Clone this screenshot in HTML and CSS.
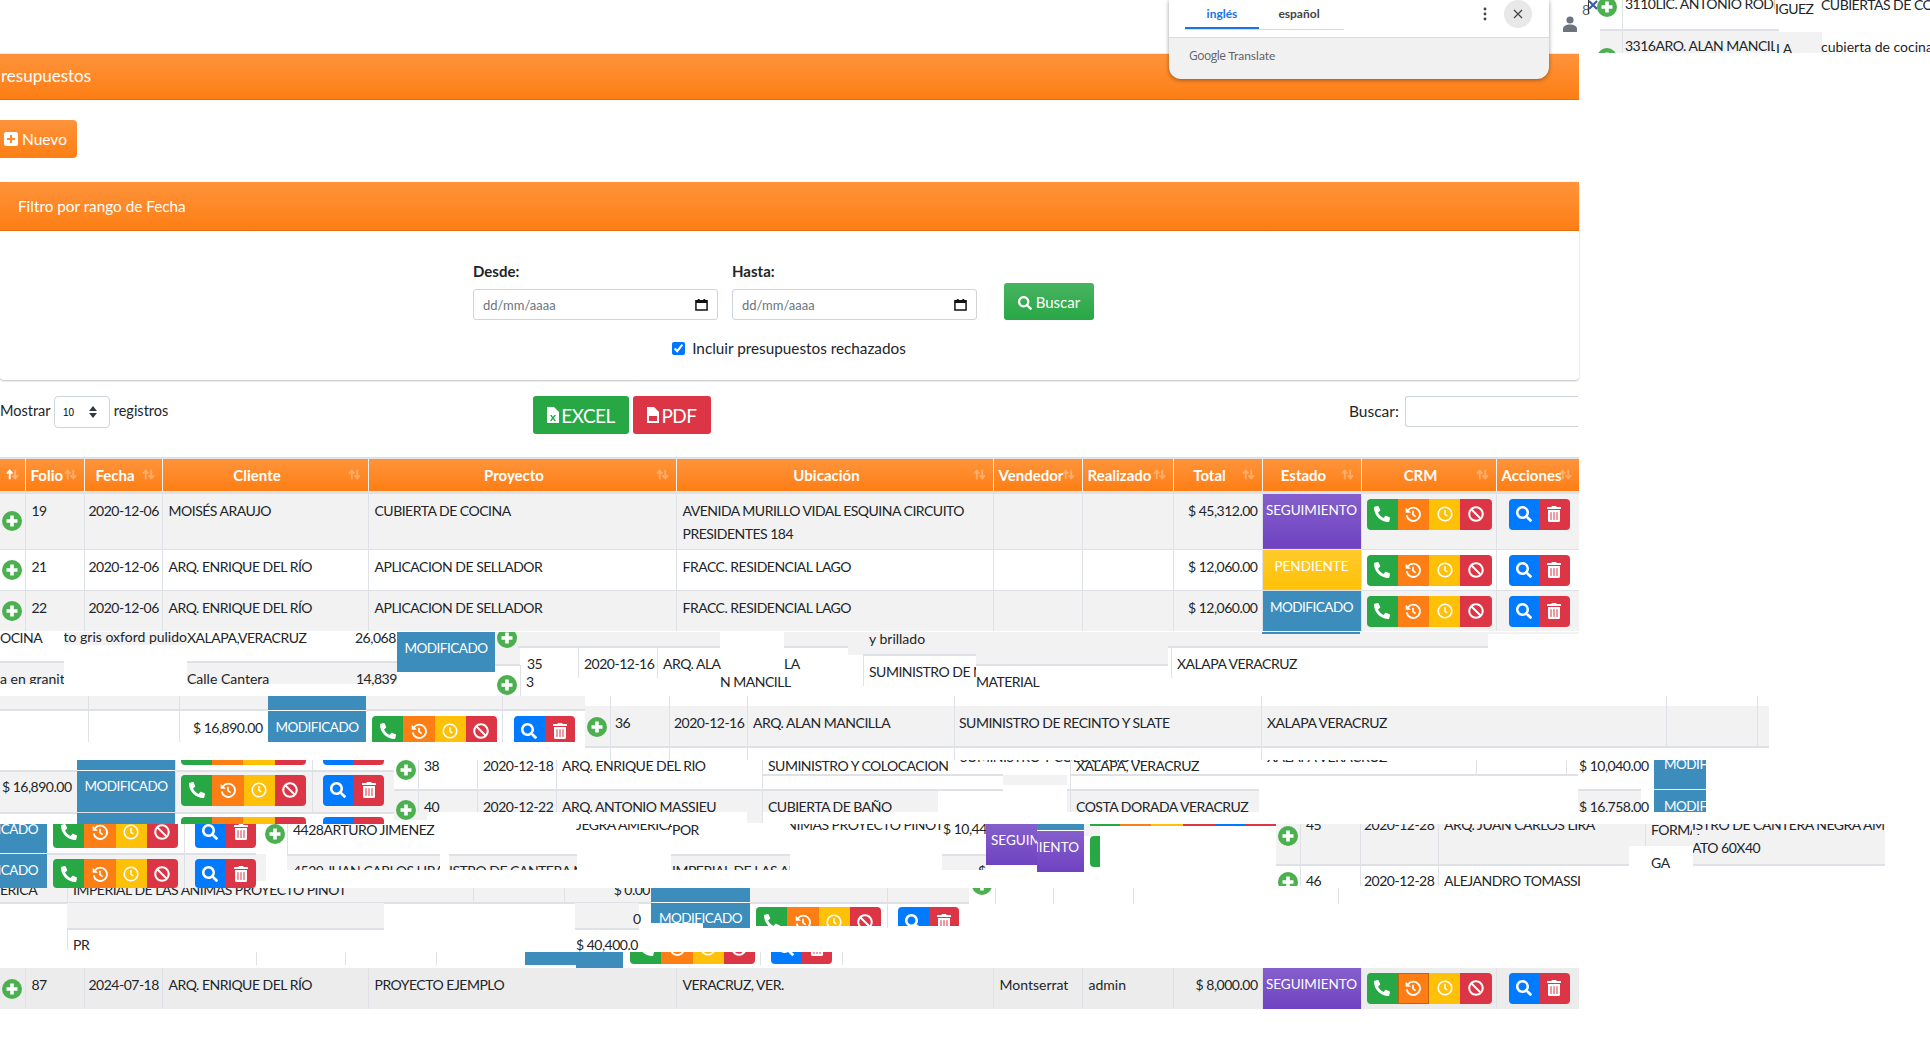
FILE: index.html
```html
<!DOCTYPE html>
<html lang="es">
<head>
  <meta charset="utf-8">
  <title>Presupuestos</title>
  <link rel="stylesheet" href="styles.css">
</head>
<body>
  <svg class="defs" width="0" height="0">
    <symbol id="i-phone" viewBox="0 0 512 512"><path transform="matrix(-1 0 0 1 512 0)" d="M493.4 24.6l-104-24c-11.3-2.6-22.9 3.3-27.5 13.9l-48 112c-4.2 9.8-1.4 21.3 6.9 28l60.6 49.6c-36 76.7-98.9 140.5-177.2 177.2l-49.6-60.6c-6.8-8.3-18.2-11.1-28-6.9l-112 48C3.9 366.5-2 378.1.6 389.4l24 104C27.1 504.2 36.7 512 48 512c256.1 0 464-207.5 464-464 0-11.2-7.7-20.9-18.6-23.4z"/></symbol>
    <symbol id="i-history" viewBox="0 0 24 24"><path d="M4.5 6.5A10 10 0 1 1 2.6 14" fill="none" stroke="currentColor" stroke-width="2.8"/><path d="M1 2.5l8 7.5H1z"/><path d="M12 7v6l4 3" fill="none" stroke="currentColor" stroke-width="2.6"/></symbol>
    <symbol id="i-clock" viewBox="0 0 24 24"><circle cx="12" cy="12" r="10.2" fill="none" stroke="currentColor" stroke-width="2.4"/><path d="M12 6v6.5l3.5 2.5" fill="none" stroke="currentColor" stroke-width="2.2"/></symbol>
    <symbol id="i-ban" viewBox="0 0 512 512"><path d="M256 8C119.034 8 8 119.033 8 256s111.034 248 248 248 248-111.034 248-248S392.967 8 256 8zm130.108 117.892c65.448 65.448 70 165.481 20.677 235.637L150.47 105.216c70.204-49.356 170.226-44.735 235.638 20.676zM125.892 386.108c-65.448-65.448-70-165.481-20.677-235.637L361.53 406.784c-70.203 49.356-170.226 44.736-235.638-20.676z"/></symbol>
    <symbol id="i-search" viewBox="0 0 512 512"><path d="M505 442.7L405.3 343c-4.5-4.5-10.6-7-17-7H372c27.6-35.3 44-79.7 44-128C416 93.1 322.9 0 208 0S0 93.1 0 208s93.1 208 208 208c48.3 0 92.7-16.4 128-44v16.3c0 6.4 2.5 12.5 7 17l99.7 99.7c9.4 9.4 24.6 9.4 33.9 0l28.3-28.3c9.4-9.4 9.4-24.6.1-34zM208 336c-70.7 0-128-57.2-128-128 0-70.7 57.2-128 128-128 70.7 0 128 57.2 128 128 0 70.7-57.2 128-128 128z"/></symbol>
    <symbol id="i-trash" viewBox="0 0 448 512"><path d="M32 464a48 48 0 0 0 48 48h288a48 48 0 0 0 48-48V128H32zm272-256a16 16 0 0 1 32 0v224a16 16 0 0 1-32 0zm-96 0a16 16 0 0 1 32 0v224a16 16 0 0 1-32 0zm-96 0a16 16 0 0 1 32 0v224a16 16 0 0 1-32 0zM432 32H312l-9.4-18.7A24 24 0 0 0 281.1 0H166.8a23.72 23.72 0 0 0-21.4 13.3L136 32H16A16 16 0 0 0 0 48v32a16 16 0 0 0 16 16h416a16 16 0 0 0 16-16V48a16 16 0 0 0-16-16z"/></symbol>
    <symbol id="i-plus" viewBox="0 0 20 20"><circle cx="10" cy="10" r="10" fill="#4caf50"/><path d="M8.2 4.500h3.600v3.700h3.700v3.600h-3.700v3.700H8.200v-3.700H4.500V8.200h3.700z" fill="#fff"/></symbol>
    <symbol id="i-sort" viewBox="0 0 16 14"><path d="M4.500 13V3M1 6l3.500-4L8 6" fill="none" stroke="currentColor" stroke-width="2.400"/><path d="M11.500 1v10M8 8l3.500 4L15 8" fill="none" stroke="currentColor" stroke-width="2.400"/></symbol>
  </svg>

  <div class="page">
    <div class="bar">resupuestos</div>

    <div class="new-row">
      <button class="btn-new">
        <svg class="ico-new" viewBox="0 0 14 14"><rect width="14" height="14" rx="2" fill="#fff"/><path d="M6 3h2v3h3v2H8v3H6V8H3V6h3z" fill="#fd8a2c"/></svg>
        Nuevo
      </button>
    </div>

    <div class="card">
      <div class="card-head">Filtro por rango de Fecha</div>
      <div class="card-body">
        <div class="range">
          <div class="field">
            <label class="lbl">Desde:</label>
            <div class="date-input"><span>dd/mm/aaaa</span><svg class="cal" viewBox="0 0 14 14"><path d="M1 3h12v10H1z" fill="none" stroke="#111" stroke-width="1.6"/><path d="M1 2.500h12v3H1zM3 1h2v2H3zM9 1h2v2H9z" fill="#111"/></svg></div>
          </div>
          <div class="field">
            <label class="lbl">Hasta:</label>
            <div class="date-input"><span>dd/mm/aaaa</span><svg class="cal" viewBox="0 0 14 14"><path d="M1 3h12v10H1z" fill="none" stroke="#111" stroke-width="1.6"/><path d="M1 2.500h12v3H1zM3 1h2v2H3zM9 1h2v2H9z" fill="#111"/></svg></div>
          </div>
          <button class="btn-buscar"><svg class="ico" viewBox="0 0 512 512"><use href="#i-search"/></svg> Buscar</button>
        </div>
        <label class="check"><input type="checkbox" checked> Incluir presupuestos rechazados</label>
      </div>
    </div>

    <div class="tools">
      <div class="length">Mostrar <select class="sel"><option>10</option></select> registros</div>
      <div class="exports">
        <button class="btn-exp excel"><svg class="ico-file" viewBox="0 0 12 16"><path d="M0 0h7l5 5v11H0z" fill="#fff"/><path d="M3 8l2 3-2 3h1.600L6 12l1.400 2H9l-2-3 2-3H7.400L6 10 4.600 8z" fill="#28a745"/></svg>EXCEL</button>
        <button class="btn-exp pdf"><svg class="ico-file" viewBox="0 0 12 16"><path d="M0 0h7l5 5v11H0z" fill="#fff"/><path d="M2 9h8v5H2z" fill="#dc3545"/></svg>PDF</button>
      </div>
      <div class="search">Buscar: <input class="search-input" type="text"></div>
    </div>

    <div class="table-wrap">
      <table class="grid">
        <colgroup><col class="w0"><col class="w1"><col class="w2"><col class="w3"><col class="w4"><col class="w5"><col class="w6"><col class="w7"><col class="w8"><col class="w9"><col class="w10"><col class="w11"></colgroup>
        <thead>
          <tr>
            <th><svg class="sort up" viewBox="0 0 16 14"><path d="M4.500 13V3M1 6l3.500-4L8 6" fill="none" stroke="#fff" stroke-width="2.400"/><path class="faded" d="M11.500 1v10M8 8l3.500 4L15 8" fill="none" stroke="#fff" stroke-width="2.400"/></svg></th>
            <th class="tl">Folio<svg class="sort" viewBox="0 0 16 14"><use href="#i-sort"/></svg></th>
            <th>Fecha<svg class="sort" viewBox="0 0 16 14"><use href="#i-sort"/></svg></th>
            <th>Cliente<svg class="sort" viewBox="0 0 16 14"><use href="#i-sort"/></svg></th>
            <th>Proyecto<svg class="sort" viewBox="0 0 16 14"><use href="#i-sort"/></svg></th>
            <th>Ubicación<svg class="sort" viewBox="0 0 16 14"><use href="#i-sort"/></svg></th>
            <th class="tl">Vendedor<svg class="sort" viewBox="0 0 16 14"><use href="#i-sort"/></svg></th>
            <th class="tl">Realizado<svg class="sort" viewBox="0 0 16 14"><use href="#i-sort"/></svg></th>
            <th>Total<svg class="sort" viewBox="0 0 16 14"><use href="#i-sort"/></svg></th>
            <th>Estado<svg class="sort" viewBox="0 0 16 14"><use href="#i-sort"/></svg></th>
            <th>CRM<svg class="sort" viewBox="0 0 16 14"><use href="#i-sort"/></svg></th>
            <th class="tl">Acciones<svg class="sort" viewBox="0 0 16 14"><use href="#i-sort"/></svg></th>
          </tr>
        </thead>
        <tbody>
          <tr class="odd">
            <td class="ctl"><svg class="plus"><use href="#i-plus"/></svg></td>
            <td>19</td><td class="nw">2020-12-06</td><td>MOISÉS ARAUJO</td><td>CUBIERTA DE COCINA</td>
            <td>AVENIDA MURILLO VIDAL ESQUINA CIRCUITO PRESIDENTES 184</td><td></td><td></td>
            <td class="num">$ 45,312.00</td><td class="st seg">SEGUIMIENTO</td>
            <td class="acts"><div class="grp"><span class="bt gr"><svg><use href="#i-phone"/></svg></span><span class="bt or"><svg><use href="#i-history"/></svg></span><span class="bt ye"><svg><use href="#i-clock"/></svg></span><span class="bt re"><svg><use href="#i-ban"/></svg></span></div></td>
            <td class="acts"><div class="grp act"><span class="bt bl"><svg><use href="#i-search"/></svg></span><span class="bt re"><svg><use href="#i-trash"/></svg></span></div></td>
          </tr>
          <tr>
            <td class="ctl"><svg class="plus"><use href="#i-plus"/></svg></td>
            <td>21</td><td class="nw">2020-12-06</td><td>ARQ. ENRIQUE DEL RÍO</td><td>APLICACION DE SELLADOR</td>
            <td>FRACC. RESIDENCIAL LAGO</td><td></td><td></td>
            <td class="num">$ 12,060.00</td><td class="st pen">PENDIENTE</td>
            <td class="acts"><div class="grp"><span class="bt gr"><svg><use href="#i-phone"/></svg></span><span class="bt or"><svg><use href="#i-history"/></svg></span><span class="bt ye"><svg><use href="#i-clock"/></svg></span><span class="bt re"><svg><use href="#i-ban"/></svg></span></div></td>
            <td class="acts"><div class="grp act"><span class="bt bl"><svg><use href="#i-search"/></svg></span><span class="bt re"><svg><use href="#i-trash"/></svg></span></div></td>
          </tr>
          <tr class="odd">
            <td class="ctl"><svg class="plus"><use href="#i-plus"/></svg></td>
            <td>22</td><td class="nw">2020-12-06</td><td>ARQ. ENRIQUE DEL RÍO</td><td>APLICACION DE SELLADOR</td>
            <td>FRACC. RESIDENCIAL LAGO</td><td></td><td></td>
            <td class="num">$ 12,060.00</td><td class="st mod">MODIFICADO</td>
            <td class="acts"><div class="grp"><span class="bt gr"><svg><use href="#i-phone"/></svg></span><span class="bt or"><svg><use href="#i-history"/></svg></span><span class="bt ye"><svg><use href="#i-clock"/></svg></span><span class="bt re"><svg><use href="#i-ban"/></svg></span></div></td>
            <td class="acts"><div class="grp act"><span class="bt bl"><svg><use href="#i-search"/></svg></span><span class="bt re"><svg><use href="#i-trash"/></svg></span></div></td>
          </tr>
        </tbody>
      </table>
    </div>

    <!-- tramo con los trozos de filas desplazados -->
    <div class="band">
      <!-- A -->
      <div class="bx gy clip r n a1">to gris oxford pulido</div>
      <div class="tx a2">OCINA</div>
      <div class="tx a3">XALAPA,VERACRUZ</div>
      <div class="tx a4">26,068</div>
      <div class="bx bu lab a5">MODIFICADO</div>
      <div class="bx gy lb a6"></div>
      <svg class="plus pl a7"><use href="#i-plus"/></svg>
      <div class="bx gy lb a8"></div>
      <div class="bx gy a10"></div>
      <div class="bx gy lb a11"></div>
      <div class="tx n a9">y brillado</div>
      <div class="bx gy lb a12"></div>
      <div class="bx gy lb a13"></div>
      <div class="bx bu a14"></div>
      <div class="bx gy a15"></div>
      <div class="bx wh a16"></div>
      <div class="vl a17"></div><div class="vl a18"></div><div class="vl a19"></div><div class="vl a20"></div><div class="vl a21"></div>
      <div class="tx a22">35</div>
      <div class="tx a23">2020-12-16</div>
      <div class="tx a24">ARQ. ALA</div>
      <div class="tx a25">LA</div>
      <div class="tx a26">N MANCILL</div>
      <div class="bx clip a27">SUMINISTRO DE M</div>
      <div class="tx a28">MATERIAL</div>
      <div class="tx a29">XALAPA VERACRUZ</div>
      <div class="tx a30">3</div>
      <div class="bx gy lt clip n a31">a en granit</div>
      <div class="bx gy lt a32"></div>
      <div class="tx n a33">Calle Cantera</div>
      <div class="tx a34">14,839</div>
      <svg class="plus pl a35"><use href="#i-plus"/></svg>

      <!-- C, texto de la mitad (va antes de la franja blanca) -->
      <div class="bx gy lt c1"></div>
      <div class="bx gy c2"></div>
      <div class="bx gy c3"></div>
      <div class="hl c4"></div>
      <div class="tx c5">38</div>
      <div class="tx c6">2020-12-18</div>
      <div class="tx c7">ARQ. ENRIQUE DEL RÍO</div>
      <div class="tx c8">SUMINISTRO Y COLOCACION</div>
      <div class="tx c9">XALAPA, VERACRUZ</div>
      <div class="tx c10">SUMINISTRO Y COLOCACION</div>
      <div class="tx c11">XALAPA VERACRUZ</div>
      <div class="bx wh c12"></div>

      <!-- B -->
      <div class="bx gy lb b1"></div>
      <div class="vl b2"></div><div class="vl b3"></div><div class="vl b4"></div>
      <div class="bx bu lab b5">MODIFICADO</div>
      <div class="tx b6">$ 16,890.00</div>
      <div class="grp b7"><span class="bt gr"><svg><use href="#i-phone"/></svg></span><span class="bt or"><svg><use href="#i-history"/></svg></span><span class="bt ye"><svg><use href="#i-clock"/></svg></span><span class="bt re"><svg><use href="#i-ban"/></svg></span></div>
      <div class="grp act b8"><span class="bt bl"><svg><use href="#i-search"/></svg></span><span class="bt re"><svg><use href="#i-trash"/></svg></span></div>
      <div class="bx gy lb b9"></div>
      <div class="vl b10"></div><div class="vl b11"></div><div class="vl b12"></div><div class="vl b13"></div><div class="vl b14"></div><div class="vl b15"></div><div class="vl b16"></div>
      <svg class="plus pl b17"><use href="#i-plus"/></svg>
      <div class="tx b18">36</div>
      <div class="tx b19">2020-12-16</div>
      <div class="tx b20">ARQ. ALAN MANCILLA</div>
      <div class="tx b21">SUMINISTRO DE RECINTO Y SLATE</div>
      <div class="tx b22">XALAPA VERACRUZ</div>

      <!-- C -->
      <div class="bx gy lt lb c13"></div>
      <div class="bx bu lab c14">MODIFICADO</div>
      <div class="bx bu lab clip c15">MODIFICADO</div>
      <div class="tx c16">$ 16,890.00</div>
      <div class="strip c17"></div>
      <div class="strip sa c18"></div>
      <div class="grp c19"><span class="bt gr"><svg><use href="#i-phone"/></svg></span><span class="bt or"><svg><use href="#i-history"/></svg></span><span class="bt ye"><svg><use href="#i-clock"/></svg></span><span class="bt re"><svg><use href="#i-ban"/></svg></span></div>
      <div class="grp act c20"><span class="bt bl"><svg><use href="#i-search"/></svg></span><span class="bt re"><svg><use href="#i-trash"/></svg></span></div>
      <div class="strip top c21"></div>
      <div class="strip sa top c22"></div>
      <div class="vl c23"></div><div class="vl c24"></div>
      <svg class="plus pl c25"><use href="#i-plus"/></svg>
      <svg class="plus pl c26"><use href="#i-plus"/></svg>
      <div class="vl c27"></div><div class="vl c28"></div><div class="vl c29"></div><div class="vl c30"></div>
      <div class="tx c31">40</div>
      <div class="tx c32">2020-12-22</div>
      <div class="tx c33">ARQ. ANTONIO MASSIEU</div>
      <div class="tx c34">CUBIERTA DE BAÑO</div>
      <div class="bx gy c35"></div>
      <div class="hl c36"></div>
      <div class="hl c37"></div>
      <div class="vl c38"></div><div class="vl c39"></div>
      <div class="bx gy lt c40"></div>
      <div class="vl c41"></div>
      <div class="tx c42">COSTA DORADA VERACRUZ</div>
      <div class="bx gy lt c43"></div>
      <div class="tx c44">$ 16,758.00</div>
      <div class="tx c45">$ 10,040.00</div>
      <div class="bx bu lab clip c46">MODIFICADO</div>
      <div class="bx bu lab clip c47">MODIFICADO</div>

      <!-- D -->
      <div class="bx bu lab clip e d1"><span>MODIFICADO</span></div>
      <div class="bx bu lab clip e d2"><span>MODIFICADO</span></div>
      <div class="bx gy lt d3"></div>
      <div class="bx gy d4"></div>
      <div class="grp cut d5"><span class="bt gr"><svg><use href="#i-phone"/></svg></span><span class="bt or"><svg><use href="#i-history"/></svg></span><span class="bt ye"><svg><use href="#i-clock"/></svg></span><span class="bt re"><svg><use href="#i-ban"/></svg></span></div>
      <div class="grp act cut d6"><span class="bt bl"><svg><use href="#i-search"/></svg></span><span class="bt re"><svg><use href="#i-trash"/></svg></span></div>
      <div class="grp d7"><span class="bt gr"><svg><use href="#i-phone"/></svg></span><span class="bt or"><svg><use href="#i-history"/></svg></span><span class="bt ye"><svg><use href="#i-clock"/></svg></span><span class="bt re"><svg><use href="#i-ban"/></svg></span></div>
      <div class="grp act d8"><span class="bt bl"><svg><use href="#i-search"/></svg></span><span class="bt re"><svg><use href="#i-trash"/></svg></span></div>
      <div class="vl d9"></div>
      <svg class="plus pl d10"><use href="#i-plus"/></svg>
      <div class="vl d11"></div>
      <div class="tx d12">4428ARTURO JIMENEZ</div>
      <div class="bx gy lt clip d13">4529 JUAN CARLOS LIRA</div>
      <div class="bx gy lt clip d14">ISTRO DE CANTERA NEGRA</div>
      <div class="bx clip d15">JEGRA AMERICA</div>
      <div class="tx d16">POR</div>
      <div class="bx clip r d17">NIMAS PROYECTO PINOT</div>
      <div class="bx clip d18">$ 10,440.00</div>
      <div class="bx gy lt clip d19">IMPERIAL DE LAS ANIMAS</div>
      <div class="bx gy lt clip d20">$</div>
      <div class="bx pu lab clip d21">SEGUIMIENTO</div>
      <div class="bx pu lab clip e d22"><span>SEGUIMIENTO</span></div>
      <div class="bx bu d23"></div>
      <div class="bx gy d24"></div>
      <div class="bx d25"></div>
      <div class="strip long d26"></div>

      <div class="bx gy lb d27"></div>
      <svg class="plus pl d28"><use href="#i-plus"/></svg>
      <div class="tx d29">45</div>
      <div class="tx d30">2020-12-28</div>
      <div class="tx d31">ARQ. JUAN CARLOS LIRA</div>
      <div class="tx d32">FORMA</div>
      <div class="bx gy clip d33">ISTRO DE CANTERA NEGRA AMERICA</div>
      <div class="tx d34">ATO 60X40</div>
      <div class="bx wh d35"></div>
      <div class="vl d36"></div><div class="vl d37"></div><div class="vl d38"></div><div class="vl d39"></div>
      <div class="bx wh d40"></div>
      <div class="tx d41">GA</div>
      <div class="bx clip d42"><svg class="plus"><use href="#i-plus"/></svg></div>
      <div class="tx d43">46</div>
      <div class="tx d44">2020-12-28</div>
      <div class="tx d45">ALEJANDRO TOMASSI</div>
      <div class="bx clip d46"><svg class="plus d47"><use href="#i-plus"/></svg></div>

      <!-- E -->
      <div class="bx gy lb e1"></div>
      <div class="bx gy clip e2">ERICA</div>
      <div class="bx gy clip e3">IMPERIAL DE LAS ANIMAS PROYECTO PINOT</div>
      <div class="bx gy clip e4">$ 0.00</div>
      <div class="vl e5"></div><div class="vl e6"></div><div class="vl e7"></div>
      <div class="bx gy lb e8"></div>
      <div class="bx gy lb e9"></div>
      <div class="tx e10">0</div>
      <div class="tx e11">PR</div>
      <div class="tx e12">$ 40,400.0</div>
      <div class="bx bu e13"></div>
      <div class="bx bu lab clip e14">MODIFICADO</div>
      <div class="bx bu e15"></div>
      <div class="bx gy lb e16"></div>
      <div class="vl e17"></div><div class="vl e18"></div><div class="vl e19"></div><div class="vl e20"></div><div class="vl e21"></div>
      <div class="grp e22"><span class="bt gr"><svg><use href="#i-phone"/></svg></span><span class="bt or"><svg><use href="#i-history"/></svg></span><span class="bt ye"><svg><use href="#i-clock"/></svg></span><span class="bt re"><svg><use href="#i-ban"/></svg></span></div>
      <div class="grp act e23"><span class="bt bl"><svg><use href="#i-search"/></svg></span><span class="bt re"><svg><use href="#i-trash"/></svg></span></div>
      <div class="grp cut e24"><span class="bt gr"><svg><use href="#i-phone"/></svg></span><span class="bt or"><svg><use href="#i-history"/></svg></span><span class="bt ye"><svg><use href="#i-clock"/></svg></span><span class="bt re"><svg><use href="#i-ban"/></svg></span></div>
      <div class="grp act cut e25"><span class="bt bl"><svg><use href="#i-search"/></svg></span><span class="bt re"><svg><use href="#i-trash"/></svg></span></div>
      <div class="bx bu e26"></div>
      <div class="bx bu e27"></div>
      <div class="vl e28"></div><div class="vl e29"></div><div class="vl e30"></div><div class="vl e31"></div><div class="vl e32"></div>
    </div>

    <table class="grid last">
      <colgroup><col class="w0"><col class="w1"><col class="w2"><col class="w3"><col class="w4"><col class="w5"><col class="w6"><col class="w7"><col class="w8"><col class="w9"><col class="w10"><col class="w11"></colgroup>
      <tbody>
        <tr class="hov">
          <td class="ctl"><svg class="plus"><use href="#i-plus"/></svg></td>
          <td>87</td><td class="nw">2024-07-18</td><td>ARQ. ENRIQUE DEL RÍO</td><td>PROYECTO EJEMPLO</td>
          <td>VERACRUZ, VER.</td><td class="n">Montserrat</td><td class="n">admin</td>
          <td class="num">$ 8,000.00</td><td class="st seg">SEGUIMIENTO</td>
          <td class="acts"><div class="grp"><span class="bt gr"><svg><use href="#i-phone"/></svg></span><span class="bt or focus"><svg><use href="#i-history"/></svg></span><span class="bt ye"><svg><use href="#i-clock"/></svg></span><span class="bt re"><svg><use href="#i-ban"/></svg></span></div></td>
          <td class="acts"><div class="grp act"><span class="bt bl"><svg><use href="#i-search"/></svg></span><span class="bt re"><svg><use href="#i-trash"/></svg></span></div></td>
        </tr>
      </tbody>
    </table>
  </div>

  <!-- ventana de Google Translate -->
  <div class="translate">
    <div class="tr-top">
      <div class="tr-tabs"><span class="tr-tab on">inglés</span><span class="tr-tab">español</span></div>
      <svg class="tr-dots" viewBox="0 0 4 14"><circle cx="2" cy="2" r="1.4"/><circle cx="2" cy="7" r="1.4"/><circle cx="2" cy="12" r="1.4"/></svg>
      <span class="tr-close"><svg viewBox="0 0 10 10"><path d="M1 1l8 8M9 1l-8 8" stroke="#444" stroke-width="1.2"/></svg></span>
    </div>
    <div class="tr-foot"><span class="tr-g">Google</span> Translate</div>
  </div>

  <!-- esquina superior derecha -->
  <div class="corner">
    <svg class="user" viewBox="0 0 14 16"><circle cx="7" cy="4" r="3.6" fill="#6c757d"/><path d="M0 16v-3c0-3 3-4.500 7-4.500s7 1.500 7 4.500v3z" fill="#6c757d"/></svg>
    <span class="tx k1">8</span>
    <span class="vl k2"></span>
    <svg class="close-x" viewBox="0 0 10 10"><path d="M1 1l8 8M9 1l-8 8" stroke="#3b5ea8" stroke-width="2.200"/></svg>
    <svg class="plus pl k3"><use href="#i-plus"/></svg>
    <div class="bx clip k4">3110LIC. ANTONIO RODRIGUEZ</div>
    <div class="tx k5">IGUEZ</div>
    <div class="tx k6">CUBIERTAS DE COCINA</div>
    <div class="bx gy lt k7"></div>
    <div class="bx gy k8"></div>
    <div class="vl k9"></div>
    <div class="bx clip k10">3316ARO. ALAN MANCILLA</div>
    <div class="tx k11">LA</div>
    <div class="tx n k12">cubierta de cocina</div>
    <div class="bx clip k13"><svg class="plus"><use href="#i-plus"/></svg></div>
  </div>
</body>
</html>
```
FILE: styles.css
```css
/* Base */
html,
body {
  margin: 0;
  height: 1050px;
  overflow: hidden;
  background: #fff;
}
body {
  position: relative;
  font-family: "Lato", sans-serif;
  font-size: 14px;
  color: #212529;
}
.defs {
  position: absolute;
}
.page {
  width: 1579px;
  padding-top: 53px;
}

/* Barras naranjas */
.bar,
.card-head,
.btn-new,
.grid th {
  background: linear-gradient(180deg, #ff933b, #fd7e14);
  color: #fff;
}
.bar {
  height: 47px;
  line-height: 44px;
  font-size: 17px;
  padding-left: 1px;
  border-top: 1px solid #e8e8e8;
  box-sizing: border-box;
  border-bottom: 1px solid #e56f0d;
}
.new-row {
  padding: 20px 0 24px;
  height: 38px;
}
.btn-new {
  width: 77px;
  height: 38px;
  border: 0;
  border-radius: 0 4px 4px 0;
  padding: 0 0 0 4px;
  font: 15.500px "Lato", sans-serif;
  display: flex;
  align-items: center;
  gap: 4px;
}
.ico-new {
  width: 14px;
  height: 14px;
}

/* Filtro */
.card {
  height: 198px;
  box-shadow: 0 1px 2px rgba(0, 0, 0, 0.25);
  border-radius: 4px;
}
.card-head {
  height: 49px;
  line-height: 48px;
  padding-left: 18px;
  font-size: 15.300px;
  border-bottom: 1px solid #e56f0d;
  box-sizing: border-box;
}
.card-body {
  padding-top: 30px;
}
.range {
  display: flex;
  padding-left: 473px;
  height: 77px;
}
.field {
  width: 245px;
  margin-right: 14px;
}
.lbl {
  display: block;
  font-weight: 700;
  font-size: 15px;
  line-height: 20px;
  margin-bottom: 8px;
}
.date-input {
  height: 31px;
  width: 245px;
  box-sizing: border-box;
  border: 1px solid #ced4da;
  border-radius: 3px;
  display: flex;
  align-items: center;
  justify-content: space-between;
  padding: 0 9px;
  font-size: 13px;
  color: #6c757d;
}
.cal {
  width: 13px;
  height: 13px;
}
.btn-buscar {
  width: 90px;
  height: 37px;
  margin: 22px 0 0 13px;
  border: 0;
  border-radius: 3px;
  background: linear-gradient(180deg, #48b461, #28a745);
  color: #fff;
  font: 15px "Lato", sans-serif;
}
.ico {
  width: 14px;
  height: 14px;
  fill: #fff;
  vertical-align: -2px;
}
.check {
  display: flex;
  align-items: center;
  justify-content: center;
  gap: 7px;
  height: 20px;
  font-size: 15.300px;
  width: 1578px;
}
.check input {
  margin: 0;
  width: 13px;
  height: 13px;
}

/* Barra de la tabla */
.tools {
  display: flex;
  align-items: flex-start;
  height: 77px;
  padding-top: 16px;
  box-sizing: border-box;
}
.length {
  width: 533px;
  line-height: 24px;
  font-size: 14.500px;
}
.sel {
  width: 56px;
  height: 32px;
  font-size: 10px;
  border: 1px solid #ced4da;
  border-radius: 4px;
  padding-left: 8px;
  margin: 0;
  appearance: none;
  background: #fff url("data:image/svg+xml,%3Csvg xmlns='http://www.w3.org/2000/svg' viewBox='0 0 8 12'%3E%3Cpath d='M4 0l4 5H0zM4 12l4-5H0z' fill='%23343a40'/%3E%3C/svg%3E") no-repeat right 12px center / 8px 12px;
}
.exports {
  display: flex;
  gap: 4px;
  width: 816px;
}
.btn-exp {
  height: 38px;
  border: 0;
  border-radius: 3px;
  color: #fff;
  font: 19px "Lato", sans-serif;
  display: flex;
  align-items: center;
  justify-content: center;
  gap: 2px;
  letter-spacing: -0.5px;
}
.excel {
  width: 96px;
  background: #28a745;
}
.pdf {
  width: 78px;
  background: #dc3545;
}
.ico-file {
  width: 12px;
  height: 16px;
}
.search {
  line-height: 31px;
  font-size: 15.500px;
  display: flex;
  gap: 6px;
  white-space: nowrap;
}
.search-input {
  width: 173px;
  height: 31px;
  box-sizing: border-box;
  border: 1px solid #ced4da;
  border-right: 0;
  border-radius: 3px 0 0 3px;
  padding: 0;
}

/* Tabla */
.table-wrap {
  height: 175px;
  overflow: hidden;
}
.grid {
  width: 1579px;
  table-layout: fixed;
  border-collapse: collapse;
}
.w0 { width: 25px; }
.w1 { width: 59px; }
.w2 { width: 78px; }
.w3 { width: 206px; }
.w4 { width: 308px; }
.w5 { width: 317px; }
.w6 { width: 89px; }
.w7 { width: 91px; }
.w8 { width: 89px; }
.w9 { width: 99px; }
.w10 { width: 135px; }
.w11 { width: 83px; }
.grid th {
  height: 34px;
  padding: 0 16px 0 0;
  box-sizing: border-box;
  font-size: 15px;
  font-weight: 700;
  text-align: center;
  position: relative;
  border-top: 2px solid #dee2e6;
  border-bottom: 3px solid #dee2e6;
  border-left: 1px solid #f3f3f3;
  border-right: 1px solid #f3f3f3;
}
.grid th:first-child {
  border-left: 0;
}
.grid th:last-child {
  border-right: 0;
}
.grid th.tl {
  text-align: left;
  padding-left: 5px;
  white-space: nowrap;
}
.sort {
  position: absolute;
  right: 7px;
  top: 10px;
  width: 13px;
  height: 11px;
  color: #fff;
  opacity: 0.3;
}
.sort.up {
  opacity: 1;
  right: 6px;
}
.faded {
  opacity: 0.4;
}
.grid td {
  vertical-align: top;
  padding: 5px 6px 4px;
  line-height: 23px;
  letter-spacing: -0.5px;
  border: 1px solid #dee2e6;
  border-width: 1px 1px 0;
  overflow: hidden;
}
.grid td:first-child {
  border-left: 0;
}
.grid td:last-child {
  border-right: 0;
}
.odd td {
  background: #f2f2f2;
}
.hov td {
  background: #ececec;
}
.grid.last td {
  border-top: 0;
}
.grid td.ctl {
  padding: 0;
  vertical-align: middle;
}
.grid td.nw {
  white-space: nowrap;
  padding-left: 4px;
  padding-right: 0;
}
.grid td.num {
  text-align: right;
  white-space: nowrap;
  padding-left: 0;
  padding-right: 4px;
}
.grid td.st {
  color: #fff;
  text-align: center;
  white-space: nowrap;
  padding-left: 0;
  padding-right: 0;
  font-size: 13.500px;
  letter-spacing: 0;
}
.grid td.mod {
  letter-spacing: -0.5px;
}
.grid td.n,
.band .n,
.corner .n {
  letter-spacing: 0;
}
.seg {
  background: linear-gradient(180deg, #8560cc, #6f42c1) !important;
}
.pen {
  background: linear-gradient(180deg, #ffca2c, #ffc107) !important;
}
.mod {
  background: #3c8dbc !important;
}
.grid td.acts {
  padding: 5px 0 4px;
}
.grid.last td.acts {
  padding: 5px 0;
}
.plus {
  display: block;
  width: 20px;
  height: 20px;
  margin-left: 2px;
}

/* Grupos de botones */
.grp {
  display: flex;
  align-items: flex-start;
  width: 125px;
  height: 31px;
  border-radius: 4px;
  overflow: hidden;
  margin-left: 5px;
}
.grp.act {
  width: 61px;
  margin-left: 12px;
}
.bt {
  flex: 1 0 0;
  height: 31px;
  box-sizing: border-box;
  padding-top: 7px;
  display: flex;
  justify-content: center;
  color: #fff;
  fill: currentColor;
}
.bt svg {
  width: 16px;
  height: 16px;
}
.gr { background: #28a745; }
.or { background: #fd7e14; }
.ye { background: #ffc107; }
.re { background: #dc3545; }
.bl { background: #007bff; }
.focus {
  box-shadow: inset 0 0 0 1px #c9620c;
}
.grp.cut {
  align-items: flex-end;
  border-radius: 0 0 4px 4px;
}

/* Trozos de filas */
.band {
  position: relative;
  height: 336px;
  width: 1930px;
  overflow: hidden;
}
.tx,
.bx,
.vl,
.hl,
.strip,
.band .grp,
.band .plus,
.corner .plus {
  position: absolute;
  margin: 0;
}
.band,
.corner {
  letter-spacing: -0.5px;
}
.tx {
  line-height: 23px;
  white-space: nowrap;
}
.vl {
  width: 1px;
  background: #dee2e6;
}
.hl {
  height: 1px;
  background: #dee2e6;
}
.gy { background: #f2f2f2; }
.wh { background: #fff; }
.bu { background: #3c8dbc; }
.pu { background: linear-gradient(180deg, #8560cc, #6f42c1); }
.lb { border-bottom: 2px solid #dee2e6; box-sizing: border-box; }
.lt { border-top: 2px solid #dee2e6; box-sizing: border-box; }
.clip {
  overflow: hidden;
  white-space: nowrap;
}
.clip.r {
  display: flex;
  justify-content: flex-end;
}
.clip.e {
  display: flex;
  justify-content: flex-end;
}
.lab {
  color: #fff;
  text-align: center;
  font-size: 13.500px;
  letter-spacing: -0.5px;
}
.pu.lab {
  letter-spacing: 0;
}
.strip {
  background: linear-gradient(90deg, #28a745 25%, #fd7e14 25%, #fd7e14 50%, #ffc107 50%, #ffc107 75%, #dc3545 75%);
  border-radius: 0 0 4px 4px;
}
.strip.sa {
  background: linear-gradient(90deg, #007bff 50%, #dc3545 50%);
}
.strip.top {
  border-radius: 4px 4px 0 0;
}
.strip.long {
  background: linear-gradient(90deg, #28a745 16%, #fd7e14 16%, #fd7e14 33%, #ffc107 33%, #ffc107 50%, #dc3545 50%, #dc3545 67%, #007bff 67%, #007bff 84%, #dc3545 84%);
}

/* A */
.a1 { left: 64px; top: 0; width: 123px; height: 13px; line-height: 10px; }
.a2 { left: 0; top: -6px; }
.a3 { left: 187px; top: -6px; }
.a4 { left: 355px; top: -6px; }
.a5 { left: 397px; top: 0; width: 98px; height: 40px; line-height: 32px; }
.a6 { left: 495px; top: 0; width: 25px; height: 34px; }
.a7 { left: 497px; top: -4px; }
.a8 { left: 518px; top: 0; width: 330px; height: 16px; }
.a9 { left: 869px; top: -5px; }
.a10 { left: 848px; top: 0; width: 16px; height: 23px; }
.a11 { left: 863px; top: 0; width: 113px; height: 24px; }
.a12 { left: 976px; top: 0; width: 192px; height: 34px; }
.a13 { left: 1168px; top: 0; width: 320px; height: 16px; }
.a14 { left: 1262px; top: 0; width: 98px; height: 2px; }
.a15 { left: 1488px; top: 0; width: 91px; height: 2px; }
.a16 { left: 720px; top: 0; width: 64px; height: 32px; }
.a17 { left: 578px; top: 16px; height: 30px; }
.a18 { left: 657px; top: 16px; height: 30px; }
.a19 { left: 1171px; top: 16px; height: 30px; }
.a20 { left: 863px; top: 24px; height: 30px; }
.a21 { left: 520px; top: 33px; height: 31px; }
.a22 { left: 527px; top: 20px; }
.a23 { left: 584px; top: 20px; }
.a24 { left: 663px; top: 20px; }
.a25 { left: 784px; top: 20px; }
.a26 { left: 720px; top: 38px; }
.a27 { left: 869px; top: 28px; width: 107px; height: 23px; line-height: 23px; }
.a28 { left: 976px; top: 38px; }
.a29 { left: 1177px; top: 20px; }
.a30 { left: 526px; top: 38px; }
.a31 { left: 0; top: 29px; width: 64px; height: 23px; line-height: 31px; }
.a32 { left: 187px; top: 29px; width: 210px; height: 23px; }
.a33 { left: 187px; top: 35px; }
.a34 { left: 356px; top: 35px; }
.a35 { left: 497px; top: 43px; }

/* B */
.b1 { left: 0; top: 64px; width: 585px; height: 15px; }
.b2 { left: 88px; top: 64px; height: 46px; }
.b3 { left: 179px; top: 64px; height: 46px; }
.b4 { left: 502px; top: 64px; height: 46px; }
.b5 {
  left: 268px;
  top: 64px;
  width: 98px;
  height: 46px;
  line-height: 62px;
  background: linear-gradient(#3c8dbc 14px, #fff 14px, #fff 15px, #3c8dbc 15px);
}
.b6 { left: 193px; top: 84px; }
.b7 { left: 372px; top: 84px; height: 26px; border-radius: 4px 4px 0 0; }
.b8 { left: 514px; top: 84px; height: 26px; border-radius: 4px 4px 0 0; }
.b9 { left: 585px; top: 74px; width: 1184px; height: 42px; }
.b10 { left: 610px; top: 64px; height: 64px; }
.b11 { left: 669px; top: 64px; height: 64px; }
.b12 { left: 747px; top: 64px; height: 64px; }
.b13 { left: 954px; top: 64px; height: 64px; }
.b14 { left: 1261px; top: 64px; height: 64px; }
.b15 { left: 1666px; top: 64px; height: 52px; }
.b16 { left: 1757px; top: 64px; height: 52px; }
.b17 { left: 587px; top: 85px; }
.b18 { left: 615px; top: 79px; }
.b19 { left: 674px; top: 79px; }
.b20 { left: 753px; top: 79px; }
.b21 { left: 959px; top: 79px; }
.b22 { left: 1267px; top: 79px; }

/* C */
.c1 { left: 394px; top: 157px; width: 544px; height: 23px; }
.c2 { left: 394px; top: 180px; width: 33px; height: 8px; }
.c3 { left: 747px; top: 180px; width: 15px; height: 11px; }
.c4 { left: 938px; top: 157px; width: 65px; height: 2px; }
.c5 { left: 424px; top: 122px; }
.c6 { left: 483px; top: 122px; }
.c7 { left: 562px; top: 122px; }
.c8 { left: 768px; top: 122px; }
.c9 { left: 1076px; top: 122px; }
.c10 { left: 960px; top: 113px; }
.c11 { left: 1267px; top: 113px; }
.c12 { left: 394px; top: 118px; width: 1270px; height: 10px; }
.c13 { left: 0; top: 138px; width: 394px; height: 44px; }
.c14 {
  left: 77px;
  top: 128px;
  width: 98px;
  height: 52px;
  line-height: 52px;
  background: linear-gradient(#3c8dbc 10px, #fff 10px, #fff 11px, #3c8dbc 11px);
}
.c15 { left: 77px; top: 181px; width: 98px; height: 11px; line-height: 32px; }
.c16 { left: 2px; top: 143px; }
.c17 { left: 181px; top: 128px; width: 125px; height: 5px; }
.c18 { left: 323px; top: 128px; width: 61px; height: 5px; }
.c19 { left: 181px; top: 143px; }
.c20 { left: 323px; top: 143px; }
.c21 { left: 181px; top: 185px; width: 125px; height: 7px; }
.c22 { left: 323px; top: 185px; width: 61px; height: 7px; }
.c23 { left: 175px; top: 128px; height: 52px; }
.c24 { left: 312px; top: 128px; height: 52px; }
.c25 { left: 396px; top: 128px; }
.c26 { left: 396px; top: 168px; }
.c27 { left: 418px; top: 128px; height: 52px; }
.c28 { left: 477px; top: 128px; height: 52px; }
.c29 { left: 556px; top: 128px; height: 52px; }
.c30 { left: 762px; top: 128px; height: 63px; }
.c31 { left: 424px; top: 163px; }
.c32 { left: 483px; top: 163px; }
.c33 { left: 562px; top: 163px; }
.c34 { left: 768px; top: 163px; }
.c35 { left: 1003px; top: 143px; width: 64px; height: 10px; }
.c36 { left: 762px; top: 142px; width: 241px; height: 2px; }
.c37 { left: 1070px; top: 142px; width: 508px; height: 2px; }
.c38 { left: 1476px; top: 128px; height: 14px; }
.c39 { left: 1566px; top: 128px; height: 14px; }
.c40 { left: 1067px; top: 157px; width: 192px; height: 23px; }
.c41 { left: 1070px; top: 128px; height: 52px; }
.c42 { left: 1076px; top: 163px; }
.c43 { left: 1578px; top: 157px; width: 63px; height: 23px; }
.c44 { left: 1579px; top: 163px; }
.c45 { left: 1579px; top: 122px; }
.c46 { left: 1654px; top: 128px; width: 52px; height: 29px; line-height: 8px; text-align: left; padding-left: 10px; box-sizing: border-box; }
.c47 { left: 1654px; top: 158px; width: 52px; height: 22px; line-height: 32px; text-align: left; padding-left: 10px; box-sizing: border-box; }

/* D */
.d1 { left: 0; top: 192px; width: 47px; height: 29px; line-height: 10px; padding-right: 9px; box-sizing: border-box; }
.d2 { left: 0; top: 222px; width: 47px; height: 34px; line-height: 32px; padding-right: 9px; box-sizing: border-box; }
.d3 { left: 47px; top: 221px; width: 209px; height: 35px; }
.d4 { left: 256px; top: 222px; width: 10px; height: 27px; }
.d5 { left: 53px; top: 192px; height: 24px; }
.d6 { left: 195px; top: 192px; height: 24px; }
.d7 { left: 53px; top: 227px; height: 29px; }
.d8 { left: 195px; top: 227px; height: 29px; }
.d9 { left: 184px; top: 192px; height: 64px; }
.d10 { left: 265px; top: 192px; }
.d11 { left: 287px; top: 192px; height: 46px; }
.d12 { left: 293px; top: 186px; }
.d13 { left: 287px; top: 222px; width: 153px; height: 16px; line-height: 30px; padding-left: 6px; box-sizing: border-box; }
.d14 { left: 449px; top: 222px; width: 128px; height: 16px; line-height: 30px; }
.d15 { left: 576px; top: 192px; width: 96px; height: 10px; line-height: 2px; }
.d16 { left: 672px; top: 186px; }
.d17 { left: 790px; top: 192px; width: 153px; height: 10px; line-height: 2px; }
.d18 { left: 943px; top: 192px; width: 43px; height: 20px; line-height: 10px; }
.d19 { left: 671px; top: 222px; width: 119px; height: 16px; line-height: 30px; padding-left: 1px; box-sizing: border-box; }
.d20 { left: 942px; top: 222px; width: 44px; height: 16px; line-height: 30px; padding-left: 36px; box-sizing: border-box; }
.d21 { left: 986px; top: 192px; width: 51px; height: 41px; line-height: 32px; text-align: left; padding-left: 5px; box-sizing: border-box; }
.d22 { left: 1037px; top: 199px; width: 47px; height: 41px; line-height: 32px; padding-right: 5px; box-sizing: border-box; }
.d23 { left: 1037px; top: 192px; width: 47px; height: 6px; }
.d24 { left: 1084px; top: 192px; width: 16px; height: 12px; }
.d25 { left: 1090px; top: 204px; width: 10px; height: 31px; background: #28a745; border-radius: 4px 0 0 4px; }
.d26 { left: 1090px; top: 192px; width: 186px; height: 2px; border-radius: 0; }
.d27 { left: 1276px; top: 192px; width: 609px; height: 42px; }
.d28 { left: 1278px; top: 194px; }
.d29 { left: 1306px; top: 181px; }
.d30 { left: 1364px; top: 181px; }
.d31 { left: 1444px; top: 181px; }
.d32 { left: 1651px; top: 186px; }
.d33 { left: 1692px; top: 192px; width: 193px; height: 10px; line-height: 2px; }
.d34 { left: 1692px; top: 204px; }
.d35 { left: 1276px; top: 180px; width: 610px; height: 12px; }
.d36 { left: 1300px; top: 192px; height: 62px; }
.d37 { left: 1360px; top: 192px; height: 62px; }
.d38 { left: 1438px; top: 192px; height: 62px; }
.d39 { left: 1645px; top: 192px; height: 22px; }
.d40 { left: 1629px; top: 214px; width: 64px; height: 22px; }
.d41 { left: 1651px; top: 219px; }
.d42 { left: 1278px; top: 240px; width: 20px; height: 14px; }
.d42 .plus { position: static; margin: 0; }
.d43 { left: 1306px; top: 237px; }
.d44 { left: 1364px; top: 237px; }
.d45 { left: 1444px; top: 237px; }
.d46 { left: 972px; top: 256px; width: 20px; height: 7px; }
.d47 { left: 0; top: -13px; }

/* E */
.e1 { left: 0; top: 256px; width: 652px; height: 16px; }
.e2 { left: 0; top: 256px; width: 40px; height: 14px; line-height: 4px; }
.e3 { left: 73px; top: 256px; width: 300px; height: 14px; line-height: 4px; }
.e4 { left: 600px; top: 256px; width: 50px; height: 14px; line-height: 4px; text-align: right; }
.e5 { left: 67px; top: 256px; height: 62px; }
.e6 { left: 473px; top: 256px; height: 16px; }
.e7 { left: 564px; top: 256px; height: 16px; }
.e8 { left: 67px; top: 271px; width: 317px; height: 27px; }
.e9 { left: 575px; top: 271px; width: 64px; height: 27px; }
.e10 { left: 633px; top: 275px; }
.e11 { left: 73px; top: 301px; }
.e12 { left: 576px; top: 301px; }
.e13 { left: 651px; top: 256px; width: 99px; height: 14px; }
.e14 { left: 651px; top: 271px; width: 99px; height: 20px; line-height: 30px; }
.e15 { left: 703px; top: 291px; width: 47px; height: 5px; }
.e16 { left: 750px; top: 256px; width: 219px; height: 16px; }
.e17 { left: 887px; top: 256px; height: 40px; }
.e18 { left: 995px; top: 256px; height: 16px; }
.e19 { left: 1053px; top: 256px; height: 16px; }
.e20 { left: 1133px; top: 256px; height: 16px; }
.e21 { left: 1338px; top: 256px; height: 16px; }
.e22 { left: 756px; top: 275px; height: 19px; border-radius: 4px 4px 0 0; }
.e23 { left: 898px; top: 275px; height: 19px; border-radius: 4px 4px 0 0; }
.e24 { left: 630px; top: 320px; height: 12px; }
.e25 { left: 771px; top: 320px; height: 12px; }
.e26 { left: 525px; top: 320px; width: 98px; height: 13px; }
.e27 { left: 576px; top: 320px; width: 47px; height: 16px; }
.e28 { left: 256px; top: 320px; height: 13px; }
.e29 { left: 345px; top: 320px; height: 13px; }
.e30 { left: 436px; top: 320px; height: 13px; }
.e31 { left: 760px; top: 320px; height: 13px; }
.e32 { left: 842px; top: 320px; height: 13px; }

/* Ventana del traductor */
.translate {
  position: absolute;
  left: 1169px;
  top: 0;
  width: 380px;
  height: 79px;
  background: #f1f1f1;
  border-radius: 0 0 12px 12px;
  box-shadow: 0 1px 4px rgba(0, 0, 0, 0.4);
  overflow: hidden;
}
.tr-top {
  height: 38px;
  background: #fff;
  border-bottom: 1px solid #dadce0;
  box-sizing: border-box;
  position: relative;
}
.tr-tabs {
  display: flex;
  margin-left: 16px;
  width: 159px;
  height: 30px;
  border-bottom: 1px solid #dadce0;
  box-sizing: border-box;
}
.tr-tab {
  width: 80px;
  text-align: center;
  line-height: 27px;
  font-size: 12px;
  font-weight: 700;
  color: #444;
}
.tr-tab.on {
  color: #1a73e8;
  border-bottom: 2px solid #1a73e8;
  height: 29px;
  width: 74px;
  box-sizing: border-box;
}
.tr-dots {
  position: absolute;
  left: 314px;
  top: 7px;
  width: 4px;
  height: 14px;
  fill: #444;
}
.tr-close {
  position: absolute;
  left: 335px;
  top: 0;
  width: 28px;
  height: 28px;
  border-radius: 50%;
  background: #e8e8e8;
  display: flex;
  align-items: center;
  justify-content: center;
}
.tr-close svg {
  width: 10px;
  height: 10px;
}
.tr-foot {
  padding: 9px 0 0 20px;
  font-size: 12px;
  color: #5f6368;
}
.tr-g {
  font-family: "Open Sans", sans-serif;
  letter-spacing: -0.5px;
}

/* Esquina superior derecha */
.corner {
  position: absolute;
  left: 0;
  top: 0;
  width: 1930px;
  height: 53px;
  overflow: hidden;
}
.user {
  position: absolute;
  left: 1563px;
  top: 16px;
  width: 14px;
  height: 16px;
}
.close-x {
  position: absolute;
  left: 1588px;
  top: 0;
  width: 10px;
  height: 10px;
}
.k1 { left: 1582px; top: -2px; color: #666; }
.k2 { left: 1588px; top: 0; height: 14px; background: #333; }
.k3 { left: 1597px; top: -3px; }
.k4 { left: 1625px; top: 0; width: 150px; height: 16px; line-height: 8px; }
.k5 { left: 1775px; top: -3px; }
.k6 { left: 1821px; top: -7px; }
.k7 { left: 1600px; top: 29px; width: 179px; height: 24px; }
.k8 { left: 1779px; top: 32px; width: 43px; height: 21px; }
.k9 { left: 1622px; top: 0; height: 53px; }
.k10 { left: 1625px; top: 32px; width: 150px; height: 21px; line-height: 28px; }
.k11 { left: 1776px; top: 37px; }
.k12 { left: 1821px; top: 35px; }
.k13 { left: 1597px; top: 48px; width: 20px; height: 5px; }
.k13 .plus { position: static; margin: 0; }
```
